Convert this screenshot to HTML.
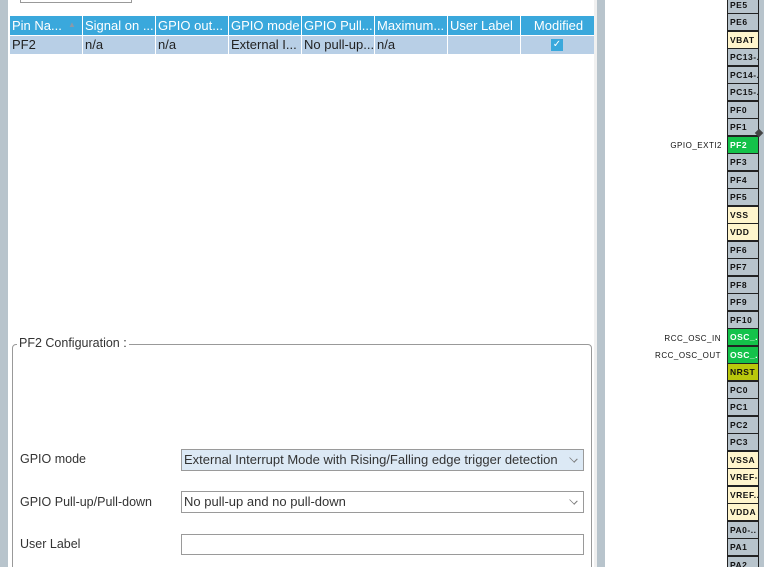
<!DOCTYPE html>
<html style="overflow:hidden;height:567px"><head><meta charset="utf-8"><style>
*{margin:0;padding:0;box-sizing:border-box}
html,body{width:764px;height:567px;overflow:hidden}
body{background:#fff;font-family:"Liberation Sans",Arial,sans-serif;position:relative}
.a{position:absolute}
.th{position:absolute;top:16px;height:19px;background:#3aa8dc;color:#fff;font-size:13px;line-height:19px;padding-left:2px;white-space:nowrap;overflow:hidden}
.td{position:absolute;top:36px;height:18px;background:#b8cfe6;color:#222;font-size:13px;line-height:18px;padding-left:2px;white-space:nowrap;overflow:hidden}
.lbl{position:absolute;left:20px;font-size:12.5px;color:#333}
.sel{position:absolute;left:181px;width:403px;height:22px;border:1px solid #9a9a9a;font-size:13px;color:#333;line-height:20px;padding-left:2px;white-space:nowrap;overflow:hidden}
.chev{position:absolute;right:6px;top:5px;width:7px;height:7px;border-right:1px solid #777;border-bottom:1px solid #777;transform:rotate(45deg) scale(1,.7)}
.pin{position:absolute;left:728px;width:30px;height:16px;background:#b8c4cc;font-size:8.5px;font-weight:bold;color:#111;line-height:17px;padding-left:2px;letter-spacing:0.5px;white-space:nowrap;overflow:hidden}
.pl{position:absolute;font-size:8px;color:#111;letter-spacing:0.5px;text-align:right;width:100px}
</style></head><body>
<div class="a" style="left:0;top:0;width:8px;height:567px;background:#b8c4cc"></div>
<div class="a" style="left:594px;top:0;width:3px;height:567px;background:#f0f0f0"></div>
<div class="a" style="left:597px;top:0;width:8px;height:567px;background:#b8c4cc"></div>
<div class="a" style="left:20px;top:-2px;width:112px;height:5px;border:1px solid #999;border-top:none"></div>

<div class="th" style="left:10px;width:72px">Pin Na...<span style="position:absolute;left:58px;top:-1px;color:#8a9aa8;font-size:8px">▲</span></div>
<div class="th" style="left:83px;width:72px">Signal on ...</div>
<div class="th" style="left:156px;width:72px">GPIO out...</div>
<div class="th" style="left:229px;width:72px">GPIO mode</div>
<div class="th" style="left:302px;width:72px">GPIO Pull...</div>
<div class="th" style="left:375px;width:72px">Maximum...</div>
<div class="th" style="left:448px;width:72px">User Label</div>
<div class="th" style="left:521px;width:73px;text-align:center">Modified</div>
<div class="td" style="left:10px;width:72px">PF2</div>
<div class="td" style="left:83px;width:72px">n/a</div>
<div class="td" style="left:156px;width:72px">n/a</div>
<div class="td" style="left:229px;width:72px">External I...</div>
<div class="td" style="left:302px;width:72px">No pull-up...</div>
<div class="td" style="left:375px;width:72px">n/a</div>
<div class="td" style="left:448px;width:72px"></div>
<div class="td" style="left:521px;width:73px"><div style="position:absolute;left:30px;top:3px;width:12px;height:12px;background:#3aa8dc;color:#fff;font-size:10px;line-height:12px;text-align:center">✓</div></div>

<div class="a" style="left:12px;top:344px;width:580px;height:240px;border:1px solid #999;border-radius:4px"></div>
<div class="a" style="left:17px;top:336px;background:#fff;padding:0 2px;font-size:12.5px;color:#333">PF2 Configuration :</div>

<div class="lbl" style="top:452px">GPIO mode</div>
<div class="sel" style="top:449px;background:#dce9f5">External Interrupt Mode with Rising/Falling edge trigger detection<div class="chev"></div></div>
<div class="lbl" style="top:495px">GPIO Pull-up/Pull-down</div>
<div class="sel" style="top:491px">No pull-up and no pull-down<div class="chev"></div></div>
<div class="lbl" style="top:537px">User Label</div>
<div class="sel" style="top:534px;height:21px"></div>

<div class="a" style="left:727px;top:0;width:32px;height:567px;background:#222"></div>
<div class="a" style="left:759px;top:0;width:5px;height:567px;background:#b8c4cc"></div>
<div class="pin" style="top:-3.5px">PE5</div>
<div class="pin" style="top:14px">PE6</div>
<div class="pin" style="top:31.5px;background:#fff5cc">VBAT</div>
<div class="pin" style="top:49px">PC13-..</div>
<div class="pin" style="top:66.5px">PC14-..</div>
<div class="pin" style="top:84px">PC15-..</div>
<div class="pin" style="top:101.5px">PF0</div>
<div class="pin" style="top:119px">PF1</div>
<div class="pin" style="top:136.5px;background:#14c24a;color:#fff">PF2</div>
<div class="pin" style="top:154px">PF3</div>
<div class="pin" style="top:171.5px">PF4</div>
<div class="pin" style="top:189px">PF5</div>
<div class="pin" style="top:206.5px;background:#fff5cc">VSS</div>
<div class="pin" style="top:224px;background:#fff5cc">VDD</div>
<div class="pin" style="top:241.5px">PF6</div>
<div class="pin" style="top:259px">PF7</div>
<div class="pin" style="top:276.5px">PF8</div>
<div class="pin" style="top:294px">PF9</div>
<div class="pin" style="top:311.5px">PF10</div>
<div class="pin" style="top:329px;background:#14c24a;color:#fff">OSC_..</div>
<div class="pin" style="top:346.5px;background:#14c24a;color:#fff">OSC_..</div>
<div class="pin" style="top:364px;background:#b9c80c">NRST</div>
<div class="pin" style="top:381.5px">PC0</div>
<div class="pin" style="top:399px">PC1</div>
<div class="pin" style="top:416.5px">PC2</div>
<div class="pin" style="top:434px">PC3</div>
<div class="pin" style="top:451.5px;background:#fff5cc">VSSA</div>
<div class="pin" style="top:469px;background:#fff5cc">VREF-</div>
<div class="pin" style="top:486.5px;background:#fff5cc">VREF..</div>
<div class="pin" style="top:504px;background:#fff5cc">VDDA</div>
<div class="pin" style="top:521.5px">PA0-..</div>
<div class="pin" style="top:539px">PA1</div>
<div class="pin" style="top:556.5px">PA2</div>
<div class="a" style="left:756px;top:130px;width:6px;height:6px;background:#444;transform:rotate(45deg)"></div>

<div class="pl" style="left:622px;top:141px">GPIO_EXTI2</div>
<div class="pl" style="left:621px;top:334px">RCC_OSC_IN</div>
<div class="pl" style="left:621px;top:351px">RCC_OSC_OUT</div>
</body></html>
